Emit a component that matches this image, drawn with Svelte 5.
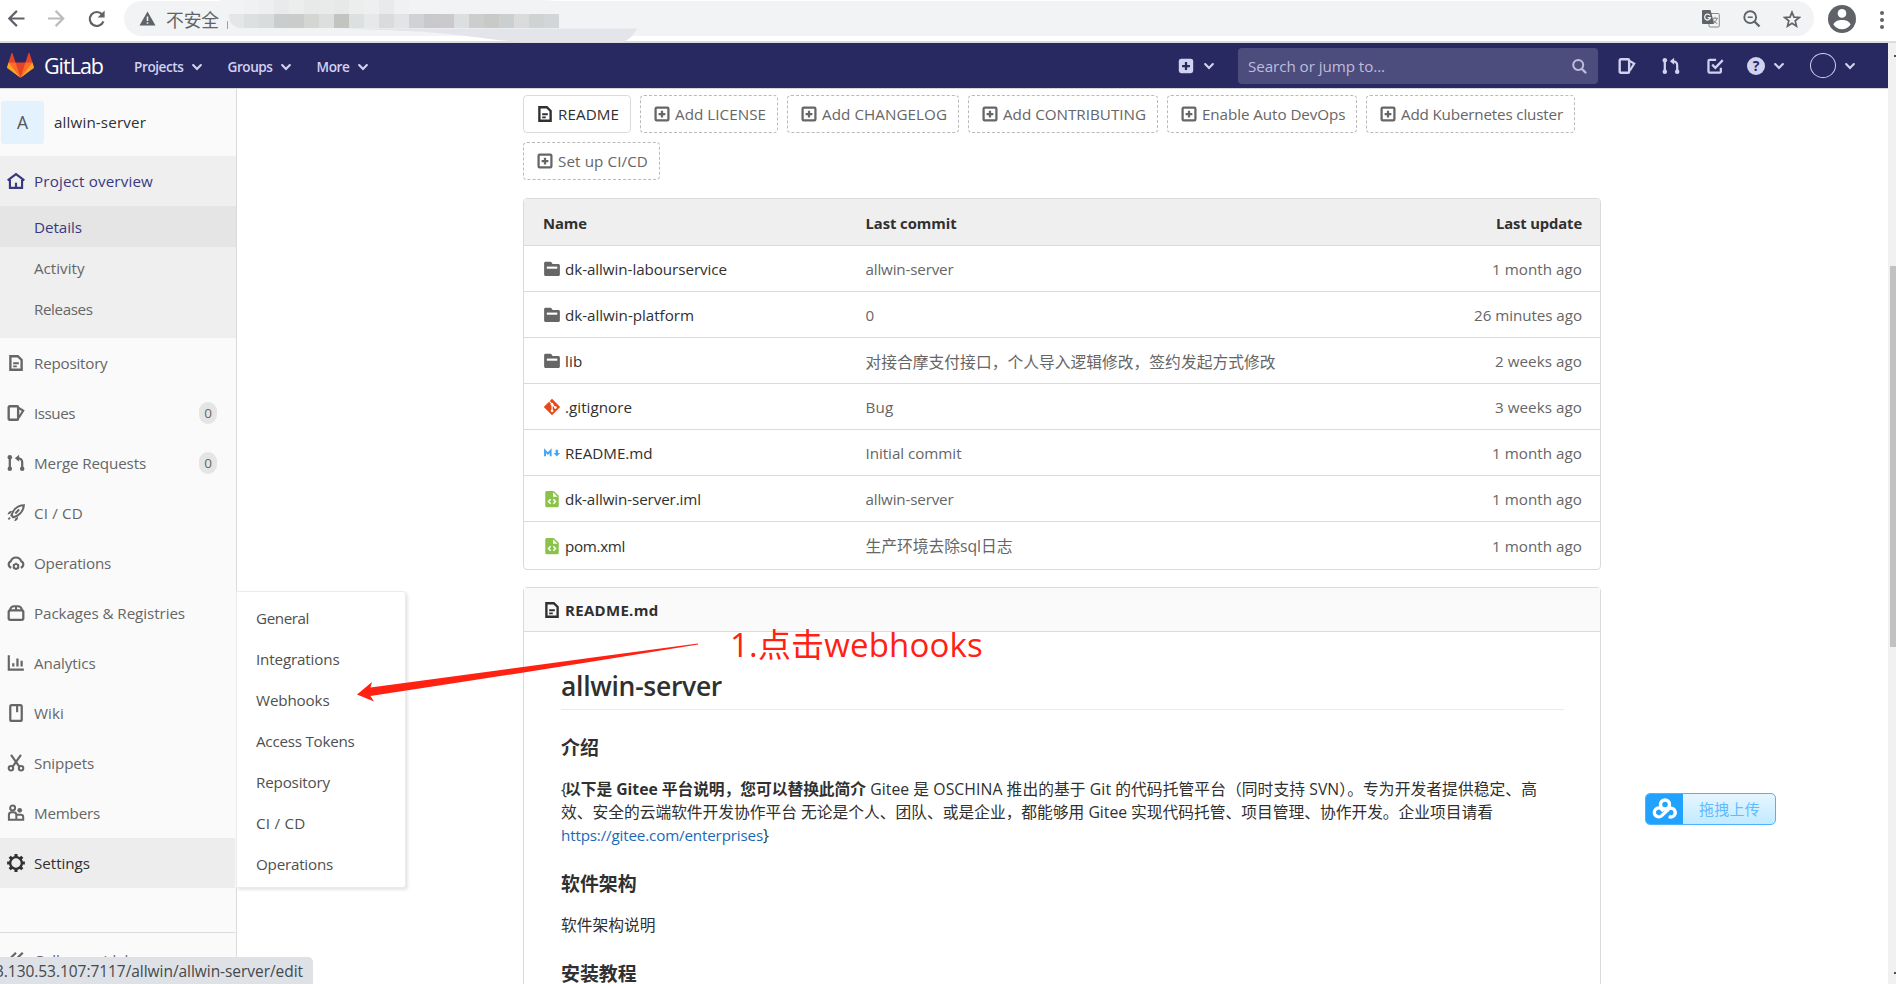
<script>
  const icons = {
    home: '<path d="M.6 7.400 8 1.900l7.400 5.500M2.600 6.800v7.300h10.800V6.800M8 14V9.600" stroke-width="1.900"/>',
    doc: '<path d="M3 2h6.600L13 5.300V14H3z" stroke-width="2.100"/><path d="M5.500 8.200h5M5.500 11h3.200" stroke-width="1.700"/>',
    issues: '<rect x="1.500" y="2" width="8.400" height="12" rx="1" stroke-width="2.100"/><path d="M10.400 3.600 14.400 5.800 10.600 12" stroke-width="1.900"/>',
    merge: '<path d="M2.500 3v10M13.500 13V7.400a3.400 3.400 0 0 0-3.200-3.600H9" stroke-width="2"/><path d="M10.800.7v6.200L7 3.800z" fill="currentColor" stroke="none"/><circle cx="2.500" cy="2.900" r="2" fill="currentColor" stroke="none"/><circle cx="2.500" cy="13.100" r="2" fill="currentColor" stroke="none"/><circle cx="13.500" cy="13.100" r="2" fill="currentColor" stroke="none"/>',
    rocket: '<path d="M5.600 11.800 4 10.200C5 6 8.500 1.500 14.900 1.100 14.600 7 10 10.600 5.600 11.800z" stroke-width="1.900"/><path d="M10.800 4.900 7.400 8.400" stroke-width="1.800"/><path d="M4.700 6.300C2.600 5.600.9 6.900.5 9.400l2.400-.8zM9.800 11.400c.4 2-1 3.600-3.400 4l.9-2.600z" fill="currentColor" stroke="none"/><path d="m1.200 13.600 1.500-1.500" stroke-width="1.600"/>',
    cloud: '<path d="M3.800 12.200A3 3 0 0 1 3.400 6.500 4.800 4.800 0 0 1 12.600 6.500 3 3 0 0 1 12.200 12.200" stroke-width="1.900"/><circle cx="8" cy="11" r="2" stroke-width="1.700"/><path d="M8 7.800v1.300M8 12.900v1.300M5.200 9.400l1.200.7M9.600 11.900l1.200.7M10.800 9.400l-1.200.7M6.400 11.900l-1.200.7" stroke-width="1.300"/>',
    package: '<rect x="1.500" y="5.600" width="13" height="8.400" rx="1.400" stroke-width="2"/><path d="M2.500 5.400C3.200 3.200 4.400 2 6 2h4c1.600 0 2.800 1.200 3.500 3.400M8 2v4.300" stroke-width="1.800"/>',
    chart: '<path d="M1.600 1v12.900H15" stroke-width="1.900"/><path d="M5.600 11V8.200M9.300 11V4M13 11V6" stroke-width="2"/>',
    book: '<rect x="2.900" y="1" width="10.200" height="14" rx="1.300" stroke-width="2"/><path d="M9 1.500v5.800" stroke-width="1.900"/>',
    scissors: '<path d="M3.600.8 10.800 11M12.400.8 5.200 11" stroke-width="1.900"/><circle cx="3.500" cy="12.700" r="2" stroke-width="1.800"/><circle cx="12.500" cy="12.700" r="2" stroke-width="1.800"/>',
    members: '<circle cx="5" cy="3.600" r="2.200" stroke-width="1.800"/><path d="M1.700 14V9.800c0-1.500 1-2.400 2.400-2.400h1.800c1.500 0 2.400.9 2.400 2.400V14zM8.800 9.600h3.400c1.400 0 2.200.8 2.200 2V14H8" stroke-width="1.800"/><circle cx="11.300" cy="5.600" r="2.100" fill="currentColor" stroke="none"/>',
    gear: '<circle cx="8" cy="8" r="5.200" stroke-width="2.100"/><path d="M8 .1v2.600M8 13.300v2.600M.1 8h2.600M13.300 8h2.600M2.400 2.400l1.900 1.900M11.700 11.700l1.900 1.900M13.600 2.400l-1.900 1.900M4.300 11.700l-1.900 1.900" stroke-width="2.700"/>',
    collapse: '<path d="M8 1.500 3 6.500l5 5M14 1.500l-5 5 5 5" stroke-width="2"/>',
    plusBox: '<rect x="2.300" y="2.300" width="11.400" height="11.400" rx="1" stroke-width="2"/><path d="M8 5v6M5 8h6" stroke-width="2"/>',
    plusSolid: '<rect x="1.600" y="1.600" width="12.800" height="12.800" rx="2.200" fill="currentColor" stroke="none"/><path d="M8 4.500v7M4.500 8h7" stroke="#292961" stroke-width="2"/>',
    todo: '<path d="M9 2.500H3.200a1 1 0 0 0-1 1v9.300a1 1 0 0 0 1 1h9a1 1 0 0 0 1-1V9.500" stroke-width="2"/><path d="m5.500 6.800 2.800 2.800 6.600-6.800" stroke-width="2"/>',
    search: '<circle cx="6.800" cy="6.500" r="4.700" stroke-width="1.900"/><path d="m10.200 10.200 3.400 3.500" stroke-width="2.200" stroke-linecap="round"/>',
    chevron: '<path d="m3.600 5.800 4.400 4.400 4.400-4.400" stroke-width="2.500" stroke-linecap="round"/>',
    folder: '<path fill="currentColor" stroke="none" d="M2.200 1.600h4.200c.6 0 1 .2 1.300.7l.8 1.200h5.100c.8 0 1.400.6 1.400 1.400v8c0 .8-.6 1.400-1.400 1.400H2.400c-.8 0-1.400-.6-1.400-1.400V2.800c0-.7.5-1.200 1.200-1.200z"/><path d="M3.400 6.800h9.300" stroke="#fff" stroke-width="1.900"/>',
    git: '<path d="m8 .7 7.300 7.300L8 15.300.7 8z" fill="#e64a19" stroke="none"/><path d="M5.600 3 8.100 5.500v6M8.100 5.800l2.900 2.700" stroke="#fff" stroke-width="1"/><circle cx="8.100" cy="5.600" r="1.200" fill="#fff" stroke="none"/><circle cx="8.100" cy="11.400" r="1.200" fill="#fff" stroke="none"/><circle cx="11" cy="8.500" r="1.200" fill="#fff" stroke="none"/>',
    markdown: '<path d="M1.800 10.900V5.900l2.500 2.700 2.500-2.700v5" stroke="#42a5f5" stroke-width="1.700"/><path d="M11.200 5h2.200v3h1.800L12.300 11.200 9.400 8h1.800z" fill="#42a5f5" stroke="none"/>',
    code: '<path d="M3.400.8h6.200L14 5.200v8.700c0 .8-.6 1.400-1.400 1.400H3.400c-.8 0-1.400-.6-1.400-1.400V2.200C2 1.400 2.600.8 3.400.8z" fill="#8bc34a" stroke="none"/><path d="M8.900 1.900v4h4z" fill="#fff" stroke="none"/><path d="M6.800 8.300 4.900 10.300l1.900 2M9.200 8.300l1.900 2-1.900 2" stroke="#fff" stroke-width="1.300"/>',
  };

  const overview = [
    { label: 'Details', w: 48, active: true },
    { label: 'Activity', w: 50.5 },
    { label: 'Releases', w: 58.5 },
  ];

  const menu = [
    { icon: 'doc', label: 'Repository', w: 73.5 },
    { icon: 'issues', label: 'Issues', w: 41, count: 0 },
    { icon: 'merge', label: 'Merge Requests', w: 112, count: 0 },
    { icon: 'rocket', label: 'CI / CD', w: 49 },
    { icon: 'cloud', label: 'Operations', w: 77 },
    { icon: 'package', label: 'Packages & Registries', w: 151 },
    { icon: 'chart', label: 'Analytics', w: 61.5 },
    { icon: 'book', label: 'Wiki', w: 30 },
    { icon: 'scissors', label: 'Snippets', w: 60 },
    { icon: 'members', label: 'Members', w: 66 },
    { icon: 'gear', label: 'Settings', w: 56, active: true },
  ];

  const settingsMenu = [
    ['General', 53],
    ['Integrations', 83.5],
    ['Webhooks', 73.5],
    ['Access Tokens', 98.5],
    ['Repository', 74],
    ['CI / CD', 49.5],
    ['Operations', 77],
  ];

  const actions = [
    { icon: 'doc', label: 'README', w: 61, box: 108, solid: true },
    { icon: 'plusBox', label: 'Add LICENSE', w: 91, box: 138 },
    { icon: 'plusBox', label: 'Add CHANGELOG', w: 125, box: 172 },
    { icon: 'plusBox', label: 'Add CONTRIBUTING', w: 143, box: 190 },
    { icon: 'plusBox', label: 'Enable Auto DevOps', w: 143.5, box: 190 },
    { icon: 'plusBox', label: 'Add Kubernetes cluster', w: 162, box: 209 },
    { icon: 'plusBox', label: 'Set up CI/CD', w: 90, box: 137 },
  ];

  const files = [
    { icon: 'folder', name: 'dk-allwin-labourservice', nw: 162, commit: 'allwin-server', cw: 88, time: '1 month ago', tw: 90 },
    { icon: 'folder', name: 'dk-allwin-platform', nw: 129, commit: '0', cw: 9, time: '26 minutes ago', tw: 108 },
    { icon: 'folder', name: 'lib', nw: 17.5, commit: '对接合摩支付接口，个人导入逻辑修改，签约发起方式修改', cw: 410, time: '2 weeks ago', tw: 87 },
    { icon: 'git', name: '.gitignore', nw: 67, commit: 'Bug', cw: 28, time: '3 weeks ago', tw: 87 },
    { icon: 'markdown', name: 'README.md', nw: 87.5, commit: 'Initial commit', cw: 96, time: '1 month ago', tw: 90 },
    { icon: 'code', name: 'dk-allwin-server.iml', nw: 136, commit: 'allwin-server', cw: 88, time: '1 month ago', tw: 90 },
    { icon: 'code', name: 'pom.xml', nw: 60, commit: '生产环境去除sql日志', cw: 147, time: '1 month ago', tw: 90 },
  ];

  // masked part of the address, one colour per tile
  const tiles = [
    '#e4e6e7', '#dde0e1', '#d8dcdd', '#c9cdcd', '#cacccc', '#d3d6d3', '#dcdfde', '#c3c3c0',
    '#dce0e1', '#e6e8e9', '#d9dbdc', '#e2e4e6', '#d0d2d5', '#c9c9cb', '#cacacc', '#dcdfe0',
    '#cbcecd', '#c9cac8', '#cccfcf', '#d9dcda', '#cfd3d4', '#d3d6d8', '#cecfd1',
  ].slice(0, 22);
  const topTiles = ['#f0f1f3', '#eeeff1', '#e9eaeb', '#eceeee', '#e8eaea', '#e9ebea', '#e7e9e8', '#eceeee', '#edeff0', '#e8eaeb', '#eff1f2'];

  /** Spread or tighten the letters so the label takes exactly `width` px */
  function fit(node, width) {
    const natural = node.getBoundingClientRect().width;
    node.style.letterSpacing = `${(width - natural) / [...node.textContent].length}px`;
  }
</script>

{#snippet icon(name, size = 18)}
  <svg class="icon" width={size} height={size} viewBox="0 0 16 16" fill="none" stroke="currentColor">{@html icons[name]}</svg>
{/snippet}

{#snippet text(label, width)}<span class="fit" use:fit={width}>{label}</span>{/snippet}

<div class="window">
  <div class="toolbar">
    <svg width="84" height="36" viewBox="0 0 84 36" fill="none" stroke-width="2.200">
      <path d="M24.500 18.500H9.500m7.400-7.600L9.300 18.500l7.600 7.600" stroke="#5f6368" />
      <path d="M48 18.500h15m-7.400-7.600 7.600 7.600-7.600 7.600" stroke="#babcbe" />
    </svg>
    <svg class="reload" width="20" height="20" viewBox="0 0 20 20" fill="none" stroke="#5f6368" stroke-width="2.200">
      <path d="M16.400 12.400A7 7 0 1 1 15.200 5.500" />
      <path d="M17.600 1.500v7h-7z" fill="#5f6368" stroke="none" />
    </svg>
    <div class="omnibox">
      <svg width="17" height="15" viewBox="0 0 17 15"><path d="M8.500.5 16.500 14.500H.5z" fill="#5f6368" /><path d="M8.500 5.500v4.500M8.500 11.200v1.600" stroke="#f1f3f4" stroke-width="1.600" /></svg>
      <span class="insecure">{@render text('不安全', 53)}</span>
      <span class="divider"></span>
      <span class="spacer"></span>
      <svg width="18" height="18" viewBox="0 0 18 18">
        <rect x="7" y="3.500" width="10.300" height="13.500" rx="1" fill="none" stroke="#85888c" />
        <path d="M1 0h7.500l3.700 14H1a1 1 0 0 1-1-1V1a1 1 0 0 1 1-1z" fill="#5f6368" />
        <path d="M8 5.500A2.900 2.900 0 1 0 8.400 7.700H5.600" fill="none" stroke="#f1f3f4" stroke-width="1.300" />
        <path d="M10 8.300h6M13 6.800v1.500M15 8.300c-.5 2.500-2 4.200-4 5.500M11.300 9.500c.8 1.900 2.200 3.300 4 4.300" fill="none" stroke="#85888c" />
      </svg>
      <svg class="zoom" width="18" height="18" viewBox="0 0 18 18" fill="none" stroke="#5f6368"><circle cx="7.200" cy="7.200" r="5.900" stroke-width="1.900" /><path d="m11.500 11.500 5 5" stroke-width="2.300" /><path d="M4.700 7.200h5" stroke-width="1.500" /></svg>
      <svg width="18" height="18" viewBox="0 0 18 18" fill="none" stroke="#5f6368" stroke-width="1.700"><path d="m9 2.200 2 4.900 5.300.4-4.100 3.400 1.300 5.200L9 13.300l-4.500 2.800 1.300-5.200L1.700 7.500 7 7.100z" /></svg>
    </div>
    <svg class="profile" width="28" height="28" viewBox="0 0 28 28"><circle cx="14" cy="14" r="14" fill="#5f6368" /><circle cx="14" cy="8.400" r="4.300" fill="#fff" /><path d="M5.400 19.500c1-3.200 5-4.500 8.600-4.500s7.600 1.300 8.600 4.500c-2 3-5 4.700-8.600 4.700s-6.600-1.700-8.600-4.700z" fill="#fff" /></svg>
    <span class="dots"><i></i><i></i><i></i></span>

    <div class="mask">
      <svg width="420" height="42" viewBox="0 0 420 42">
        <path d="M0 0h320c50 2 92 8 99 18v11H20C8 26 0 14 0 0z" fill="#f1f3f4" />
        <path d="M115 28.500h302c-4 8-9 12-16 13.500h-96c-22-1-36-3-55-5.500-45-6-75-6-135-8z" fill="#e4e5eb" />
      </svg>
      <div class="top-tiles">
        {#each topTiles as c}<i style:background={c}></i>{/each}
      </div>
      <div class="tiles">
        {#each tiles as c}<i style:background={c}></i>{/each}
      </div>
    </div>
  </div>

  <div class="page">
    <div class="view">
      <header class="navbar">
        <svg class="logo" width="27" height="27" viewBox="0 0 36 36">
          <path fill="#e24329" d="M2 14l9.380 9v-9l-4-12.280c-.205-.632-1.176-.632-1.380 0z" />
          <path fill="#e24329" d="M34 14l-9.380 9v-9l4-12.280c.205-.632 1.176-.632 1.380 0z" />
          <path fill="#e24329" d="M18 34.380 3 14h30z" />
          <path fill="#fc6d26" d="M18 34.380 11.380 14H2l4 11z" />
          <path fill="#fc6d26" d="M18 34.380 24.620 14H34l-4 11z" />
          <path fill="#fca326" d="M2 14 .1 20.160c-.18.565 0 1.200.5 1.560l17.420 12.660z" />
          <path fill="#fca326" d="m34 14 1.900 6.160c.18.565 0 1.200-.5 1.560L18 34.380z" />
        </svg>
        <span class="brand">{@render text('GitLab', 59)}</span>
        <nav>
          <a href="#projects">{@render text('Projects', 49.5)}{@render icon('chevron', 14)}</a>
          <a href="#groups">{@render text('Groups', 45)}{@render icon('chevron', 14)}</a>
          <a href="#more">{@render text('More', 33)}{@render icon('chevron', 14)}</a>
        </nav>
        <span class="spacer"></span>
        <span class="new">{@render icon('plusSolid')}{@render icon('chevron', 14)}</span>
        <div class="search">{@render text('Search or jump to...', 137)}{@render icon('search', 17)}</div>
        <span class="shortcuts">
          {@render icon('issues')}
          {@render icon('merge')}
          {@render icon('todo')}
        </span>
        <span class="help">?</span>
        {@render icon('chevron', 14)}
        <span class="avatar"></span>
        {@render icon('chevron', 14)}
      </header>

      <div class="body">
        <aside class="sidebar">
          <div class="project">
            <span class="letter">A</span>
            {@render text('allwin-server', 92)}
          </div>
          <div class="overview">
            <a class="item current" href="#overview">{@render icon('home')}{@render text('Project overview', 119)}</a>
            {#each overview as o}
              <a class="sub" class:active={o.active} href="#{o.label}">{@render text(o.label, o.w)}</a>
            {/each}
          </div>
          {#each menu as m}
            <a class="item" class:hover={m.active} href="#{m.label}">
              {@render icon(m.icon)}{@render text(m.label, m.w)}
              {#if m.count !== undefined}<span class="count">{m.count}</span>{/if}
            </a>
          {/each}
          <div class="collapse">{@render icon('collapse')}{@render text('Collapse sidebar', 114)}</div>

          <div class="flyout">
            {#each settingsMenu as [label, w]}
              <a href="#{label}">{@render text(label, w)}</a>
            {/each}
          </div>
        </aside>

        <main>
          <div class="actions">
            {#each actions as a}
              <a class="btn" class:solid={a.solid} style:width="{a.box}px" href="#{a.label}">{@render icon(a.icon)}{@render text(a.label, a.w)}</a>
            {/each}
          </div>

          <div class="files">
            <div class="row head">
              <span class="name">{@render text('Name', 44)}</span>
              <span class="commit">{@render text('Last commit', 91)}</span>
              <span class="time">{@render text('Last update', 86)}</span>
            </div>
            {#each files as f}
              <div class="row">
                <span class="name">{@render icon(f.icon)}{@render text(f.name, f.nw)}</span>
                <span class="commit" class:cjk={f.cw > 140}>{@render text(f.commit, f.cw)}</span>
                <span class="time">{@render text(f.time, f.tw)}</span>
              </div>
            {/each}
          </div>

          <article class="readme">
            <div class="title">{@render icon('doc')}{@render text('README.md', 93.5)}</div>
            <div class="content">
              <h1>{@render text('allwin-server', 161)}</h1>
              <h3>介绍</h3>
              <p>
                <span class="line">{@render text('{', 4)}<strong>{@render text('以下是 Gitee 平台说明，您可以替换此简介', 301)}</strong>{@render text(' Gitee 是 OSCHINA 推出的基于 Git 的代码托管平台（同时支持 SVN）。专为开发者提供稳定、高', 671)}</span>
                <span class="line">{@render text('效、安全的云端软件开发协作平台 无论是个人、团队、或是企业，都能够用 Gitee 实现代码托管、项目管理、协作开发。企业项目请看', 932)}</span>
                <span class="line"><a href="#enterprises">{@render text('https://gitee.com/enterprises', 202)}</a>{@render text('}', 4)}</span>
              </p>
              <h3>软件架构</h3>
              <p>软件架构说明</p>
              <h3>安装教程</h3>
            </div>
          </article>
        </main>
      </div>
    </div>
    <div class="scrollbar"><i class="up"></i><i class="thumb"></i><i class="down"></i></div>
  </div>

  <svg class="arrow" width="345" height="64" viewBox="0 0 345 64">
    <path d="M1 54.500 16 42l-1.500 5.500Q180 25 342 3.500v1Q180 31 14.500 56l3.500 5.500z" fill="#ff2213" />
  </svg>
  <div class="note">{@render text('1.点击webhooks', 253)}</div>

  <div class="upload">
    <span class="cloud-logo">
      <svg width="26" height="22" viewBox="0 0 26 22" fill="none" stroke="#fff" stroke-width="3.400">
        <circle cx="13" cy="6.500" r="4.500" />
        <path d="M14.600 13.500A4.400 4.400 0 1 1 16.800 18.500" />
        <path d="M16.300 11.300 9.800 17.600A4.400 4.400 0 1 1 9.800 11.300L11.500 13" />
      </svg>
    </span>
    <span class="upload-label">{@render text('拖拽上传', 61)}</span>
  </div>

  <div class="status">{@render text('3.130.53.107:7117/allwin/allwin-server/edit', 308)}</div>
</div>

<style>
  :global(body) {
    margin: 0;
    overflow: hidden;
  }

  .window {
    position: relative;
    width: 1896px;
    height: 984px;
    overflow: hidden;
    display: flex;
    flex-direction: column;
    background: #fff;
    color: #303030;
    font-family: 'Open Sans', 'Noto Sans', 'Noto Sans CJK SC', sans-serif;
    font-size: 15.2px;
  }

  .window * {
    box-sizing: border-box;
  }

  a {
    color: inherit;
    text-decoration: none;
  }

  svg {
    display: block;
    flex: none;
  }

  .fit {
    display: inline-block;
    white-space: pre;
  }

  .spacer {
    flex: 1;
  }

  /* browser toolbar */
  .toolbar {
    position: relative;
    flex: none;
    display: flex;
    align-items: flex-start;
    height: 43px;
    border-bottom: 2px solid #dadce0;
  }

  .reload {
    margin: 9px 0 0 3px;
  }

  .omnibox {
    display: flex;
    align-items: center;
    width: 1690px;
    height: 35px;
    margin: 1px 0 0 17px;
    padding: 0 13px 0 15px;
    border-radius: 18px;
    background: #f1f3f4;
  }

  .insecure {
    margin-left: 10px;
    color: #5f6368;
    font-size: 17.8px;
  }

  .divider {
    width: 1px;
    height: 15px;
    margin: 5px 0 0 8px;
    background: #9aa0a6;
  }

  .zoom {
    margin: 0 22px 0 23px;
  }

  .profile {
    margin: 5px 0 0 14px;
  }

  .dots {
    display: flex;
    flex-direction: column;
    gap: 3px;
    margin: 11px 0 0 24px;
  }

  .dots i {
    width: 4px;
    height: 4px;
    border-radius: 50%;
    background: #5f6368;
  }

  .mask {
    position: absolute;
    left: 220px;
    top: 0;
    width: 420px;
    height: 42px;
  }

  .mask svg {
    position: absolute;
  }

  .top-tiles,
  .tiles {
    position: absolute;
    left: 9px;
    display: flex;
  }

  .top-tiles {
    top: 0;
    left: 24px;
  }

  .tiles {
    top: 14px;
  }

  .tiles i,
  .top-tiles i {
    width: 15px;
    height: 14px;
  }

  .tiles i:first-child {
    border-bottom-left-radius: 12px;
  }

  /* page */
  .page {
    display: flex;
    flex: 1;
    min-height: 0;
  }

  .view {
    display: flex;
    flex-direction: column;
    width: 1888px;
  }

  .navbar {
    flex: none;
    display: flex;
    align-items: center;
    height: 46px;
    padding-left: 7px;
    border-bottom: 1px solid #d5d5dc;
    background: #292961;
    color: #d1d1f0;
  }

  .brand {
    margin: 0 0 0 10px;
    color: #fff;
    font-size: 21.5px;
  }

  nav {
    display: flex;
    margin-left: 31px;
    font-size: 13.6px;
    font-weight: 600;
  }

  nav a {
    display: flex;
    align-items: center;
    gap: 6px;
    margin-top: 2px;
    margin-right: 24px;
  }

  .new {
    display: flex;
    align-items: center;
    gap: 7px;
  }

  .search {
    display: flex;
    align-items: center;
    justify-content: space-between;
    width: 360px;
    height: 36px;
    margin-left: 22px;
    padding: 1px 10px 0 10px;
    border-radius: 4px;
    background: #4c4c7d;
    color: #bdbddd;
    font-size: 15.2px;
  }

  .shortcuts {
    display: flex;
    gap: 26px;
    margin: 0 23px 0 20px;
  }

  .help {
    width: 18px;
    height: 18px;
    margin-right: 7px;
    border-radius: 50%;
    background: #d1d1f0;
    color: #292961;
    font-size: 14px;
    font-weight: 700;
    line-height: 18px;
    text-align: center;
  }

  .avatar {
    width: 26px;
    height: 25px;
    margin: 0 7px 0 24px;
    border: 1px solid #d1d1f0;
    border-radius: 50%;
  }

  .navbar > .icon:last-child {
    margin-right: 31px;
  }

  .body {
    display: flex;
    flex: 1;
    min-height: 0;
  }

  .sidebar {
    position: relative;
    width: 237px;
    border-right: 1px solid #dbdbdb;
    background: #fafafa;
    color: #666;
  }

  .project {
    display: flex;
    align-items: center;
    height: 67px;
    padding-bottom: 1px;
    color: #303030;
    font-weight: 500;
  }

  .letter {
    width: 43px;
    height: 43px;
    margin: 1px 10px 0 1px;
    border-radius: 3px;
    background: #e3f2fd;
    color: #555;
    font-size: 17.5px;
    font-weight: 500;
    line-height: 43px;
    text-align: center;
  }

  .overview {
    padding-bottom: 9px;
    background: #efefef;
  }

  .item {
    display: flex;
    align-items: center;
    gap: 9px;
    height: 50px;
    padding-left: 7px;
  }

  .item.current,
  .sub.active {
    color: #393982;
    font-weight: 500;
  }

  .sub {
    display: flex;
    align-items: center;
    height: 41px;
    padding: 1px 0 0 34px;
  }

  .sub.active {
    background: #e5e5e5;
  }

  .item.hover {
    margin-right: 1px;
    background: #ededed;
    color: #303030;
  }

  .count {
    width: 18px;
    height: 22px;
    margin-left: auto;
    margin-right: 19px;
    border-radius: 9px;
    background: #e5e5e5;
    font-size: 13.5px;
    line-height: 22px;
    text-align: center;
  }

  .collapse {
    display: flex;
    align-items: center;
    gap: 9px;
    height: 54px;
    margin: 44px 1px 0 0;
    padding: 0 0 0 7px;
    border-top: 1px solid #dbdbdb;
  }

  .flyout {
    position: absolute;
    left: 236px;
    top: 502px;
    width: 170px;
    height: 297px;
    padding: 5px 0 0 19px;
    border: 1px solid #ebebeb;
    border-radius: 0 3px 3px 0;
    background: #fff;
    box-shadow: 2px 2px 3px rgba(0, 0, 0, 0.1);
    color: #4f4f4f;
  }

  .flyout a {
    display: flex;
    align-items: center;
    height: 41px;
  }

  main {
    width: 1078px;
    margin-left: 286px;
  }

  .actions {
    display: flex;
    flex-wrap: wrap;
    gap: 9px;
    padding-top: 6px;
  }

  .btn {
    display: flex;
    align-items: center;
    gap: 4px;
    height: 38px;
    padding: 0 0 1px 12px;
    border: 1px dashed #bababa;
    border-radius: 4px;
    color: #666;
  }

  .btn.solid {
    border: 1px solid #dbdbdb;
    color: #303030;
  }

  .files {
    margin-top: 18px;
    border: 1px solid #dbdbdb;
    border-radius: 4px;
    overflow: hidden;
  }

  .row {
    display: flex;
    align-items: center;
    height: 46px;
    padding: 1px 18px 0 19px;
    border-top: 1px solid #dbdbdb;
    color: #666;
  }

  .row.head {
    padding-top: 2px;
    border: 0;
    background: #efefef;
    color: #303030;
    font-size: 14.8px;
    font-weight: 700;
  }

  .row:last-child {
    height: 48px;
    padding-bottom: 1px;
  }

  .name {
    display: flex;
    align-items: center;
    gap: 4px;
    width: 322.5px;
  }

  .row:not(.head) .name .fit {
    color: #303030;
  }

  .time {
    margin-left: auto;
  }

  .cjk {
    font-size: 15.75px;
  }

  .readme {
    height: 420px;
    margin-top: 17px;
    border: 1px solid #dbdbdb;
    border-radius: 4px 4px 0 0;
  }

  .title {
    display: flex;
    align-items: center;
    gap: 4px;
    height: 44px;
    padding: 1px 0 0 19px;
    border-bottom: 1px solid #dbdbdb;
    background: #fafafa;
    font-size: 15px;
    font-weight: 700;
  }

  .content {
    padding: 36px 36px 0 37px;
    font-size: 15.75px;
    line-height: 23px;
  }

  h1 {
    height: 42px;
    margin: 0 0 26px;
    border-bottom: 1px solid #eaeaea;
    font-size: 26.5px;
    font-weight: 600;
    line-height: 36px;
  }

  h3 {
    margin: 0 0 18px;
    font-size: 18.9px;
    font-weight: 700;
    line-height: 24px;
  }

  p {
    margin: 0 0 25px;
  }

  .line {
    display: flex;
    height: 23px;
    white-space: pre;
  }

  .line a {
    color: #1b69b6;
    font-size: 15.2px;
  }

  .scrollbar {
    display: flex;
    flex-direction: column;
    align-items: flex-end;
    justify-content: space-between;
    width: 8px;
    background: #f1f1f1;
  }

  .scrollbar .thumb {
    width: 6px;
    height: 381px;
    margin: 209px 0 auto;
    background: #c1c1c1;
  }

  .scrollbar .up,
  .scrollbar .down {
    width: 2px;
    height: 2px;
    background: #505050;
  }

  .scrollbar .up {
    margin-top: 12px;
  }

  .scrollbar .down {
    margin-bottom: 10px;
  }

  /* annotation over the page */
  .arrow {
    position: absolute;
    left: 356px;
    top: 640px;
  }

  .note {
    position: absolute;
    left: 730px;
    top: 622px;
    color: #ff2213;
    font-size: 33px;
    line-height: 46px;
  }

  .upload {
    position: absolute;
    left: 1645px;
    top: 793px;
    display: flex;
    width: 131px;
    height: 32px;
    border: 1.500px solid #4db2ff;
    border-radius: 5px;
    overflow: hidden;
    background: linear-gradient(#e6f6ff, #c2eaff);
    color: #5dbcff;
    font-size: 15px;
  }

  .cloud-logo {
    display: flex;
    align-items: center;
    justify-content: center;
    width: 37px;
    background: #22a2ff;
  }

  .upload-label {
    margin-left: 16px;
    line-height: 30px;
  }

  .status {
    position: absolute;
    left: 0;
    bottom: 0;
    display: flex;
    justify-content: flex-end;
    width: 313px;
    height: 27px;
    padding-right: 10px;
    border-top-right-radius: 5px;
    background: #dee1e6;
    color: #45484c;
    font-size: 15.5px;
    line-height: 29px;
    overflow: hidden;
  }
</style>
